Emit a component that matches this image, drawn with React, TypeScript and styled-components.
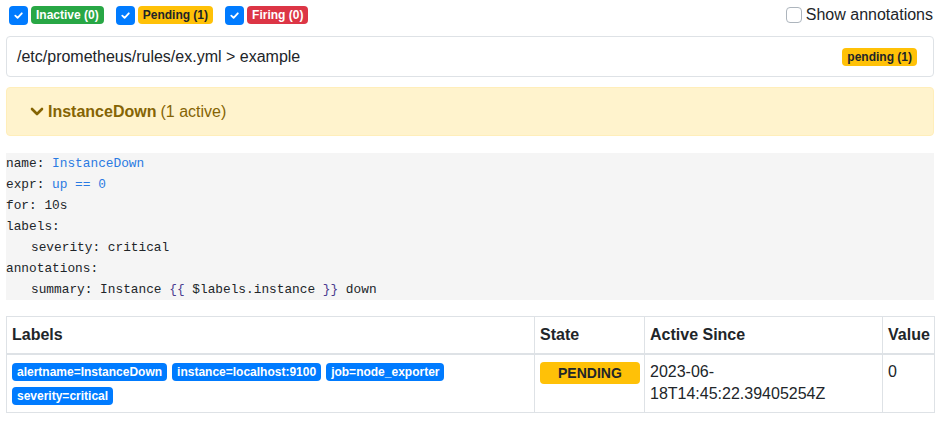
import React from "react";
import styled, { createGlobalStyle } from "styled-components";

const Global = createGlobalStyle`
  html, body { margin: 0; padding: 0; background: #fff; }
  body {
    font-family: "Segoe UI", "Liberation Sans", Arial, sans-serif;
    font-size: 16px;
    color: #212529;
    line-height: 1.5;
  }
`;

const Page = styled.div`
  padding: 5px 7px 0 6px;
`;

const FilterBar = styled.div`
  display: flex;
  align-items: center;
  height: 20px;
  margin-left: 3px;
`;

const FilterItem = styled.label`
  display: flex;
  align-items: center;
  gap: 3px;
  margin-right: 12px;
`;

const CheckBox = styled.span<{ $checked?: boolean }>`
  display: inline-flex;
  align-items: center;
  justify-content: center;
  width: ${(p) => (p.$checked ? "19px" : "16px")};
  height: ${(p) => (p.$checked ? "19px" : "16px")};
  box-sizing: border-box;
  border-radius: 4px;
  background: ${(p) => (p.$checked ? "#007bff" : "#fff")};
  border: ${(p) => (p.$checked ? "none" : "1px solid #adb5bd")};
`;

const Badge = styled.span<{ $bg: string; $fg: string }>`
  display: inline-block;
  background: ${(p) => p.$bg};
  color: ${(p) => p.$fg};
  font-weight: 700;
  font-size: 12px;
  line-height: 12px;
  padding: 3px 5px;
  border-radius: 4px;
  white-space: nowrap;
`;

const Spacer = styled.div`
  flex: 1;
`;

const AnnotToggle = styled.label`
  display: flex;
  align-items: center;
  gap: 4px;
  font-size: 16px;
  margin-right: 1px;
`;

const GroupCard = styled.div`
  margin-top: 11px;
  height: 41px;
  box-sizing: border-box;
  border: 1px solid #dee2e6;
  border-radius: 4px;
  display: flex;
  align-items: center;
  justify-content: space-between;
  padding: 0 16px 0 10px;
`;

const AlertHeader = styled.div`
  margin-top: 10px;
  height: 49px;
  box-sizing: border-box;
  background: #fff3cd;
  border: 1px solid #ffeeba;
  border-radius: 4px;
  color: #856404;
  display: flex;
  align-items: center;
  padding-left: 23px;
  gap: 4px;
`;

const RuleName = styled.strong`
  font-weight: 700;
`;

const CodeBlock = styled.pre`
  margin: 17px 0 0;
  background: #f5f5f5;
  font-family: "Liberation Mono", "DejaVu Sans Mono", monospace;
  font-size: 12.8px;
  line-height: 21px;
  color: #212529;
  padding: 0;
`;

const CodeLine = styled.div<{ $indent?: boolean }>`
  padding-left: ${(p) => (p.$indent ? "25px" : "0")};
`;

const Val = styled.span`
  color: #2a7ae2;
`;

const Brace = styled.span`
  color: #4b3b8f;
`;

const Table = styled.table`
  margin-top: 16px;
  width: 100%;
  border-collapse: collapse;
  table-layout: fixed;
`;

const Col = styled.col<{ $w: number }>`
  width: ${(p) => p.$w}px;
`;

const Th = styled.th`
  text-align: left;
  font-weight: 700;
  border: 1px solid #dee2e6;
  border-bottom: 2px solid #dee2e6;
  padding: 6px 5px 5px 5px;
  height: 37px;
  box-sizing: border-box;
  vertical-align: middle;
`;

const Td = styled.td`
  border: 1px solid #dee2e6;
  padding: 6px 5px 7px;
  vertical-align: top;
  line-height: 22px;
`;

const LabelsWrap = styled.div`
  display: flex;
  flex-wrap: wrap;
  gap: 6px 5px;
  padding-top: 2px;
`;

const StateBadge = styled.span`
  display: inline-block;
  background: #ffc107;
  color: #212529;
  font-weight: 700;
  font-size: 14px;
  line-height: 16px;
  padding: 3px 18px;
  border-radius: 4px;
  margin-top: 1px;
`;

const Check = () => (
  <svg width="11" height="11" viewBox="0 0 12 12">
    <path d="M2.5 6.2 L5 8.6 L9.6 3.6" stroke="#fff" strokeWidth="2" fill="none" strokeLinecap="round" strokeLinejoin="round" />
  </svg>
);

const Chevron = () => (
  <svg width="14" height="10" viewBox="0 0 14 10">
    <path d="M2 2 L7 7 L12 2" stroke="#856404" strokeWidth="2.6" fill="none" strokeLinecap="round" strokeLinejoin="round" />
  </svg>
);

export default function App() {
  return (
    <Page>
      <Global />
      <FilterBar>
        <FilterItem>
          <CheckBox $checked><Check /></CheckBox>
          <Badge $bg="#28a745" $fg="#fff">Inactive (0)</Badge>
        </FilterItem>
        <FilterItem>
          <CheckBox $checked><Check /></CheckBox>
          <Badge $bg="#ffc107" $fg="#212529">Pending (1)</Badge>
        </FilterItem>
        <FilterItem>
          <CheckBox $checked><Check /></CheckBox>
          <Badge $bg="#dc3545" $fg="#fff">Firing (0)</Badge>
        </FilterItem>
        <Spacer />
        <AnnotToggle>
          <CheckBox />
          Show annotations
        </AnnotToggle>
      </FilterBar>
      <GroupCard>
        <span>/etc/prometheus/rules/ex.yml &gt; example</span>
        <Badge $bg="#ffc107" $fg="#212529">pending (1)</Badge>
      </GroupCard>
      <AlertHeader>
        <Chevron />
        <RuleName>InstanceDown</RuleName>
        <span>(1 active)</span>
      </AlertHeader>
      <CodeBlock>
        <CodeLine>name: <Val>InstanceDown</Val></CodeLine>
        <CodeLine>expr: <Val>up == 0</Val></CodeLine>
        <CodeLine>for: 10s</CodeLine>
        <CodeLine>labels:</CodeLine>
        <CodeLine $indent>severity: critical</CodeLine>
        <CodeLine>annotations:</CodeLine>
        <CodeLine $indent>summary: Instance <Brace>{"{{"}</Brace> $labels.instance <Brace>{"}}"}</Brace> down</CodeLine>
      </CodeBlock>
      <Table>
        <colgroup>
          <Col $w={528} />
          <Col $w={110} />
          <Col $w={238} />
          <Col $w={52} />
        </colgroup>
        <thead>
          <tr>
            <Th>Labels</Th>
            <Th>State</Th>
            <Th>Active Since</Th>
            <Th>Value</Th>
          </tr>
        </thead>
        <tbody>
          <tr>
            <Td>
              <LabelsWrap>
                <Badge $bg="#007bff" $fg="#fff">alertname=InstanceDown</Badge>
                <Badge $bg="#007bff" $fg="#fff">instance=localhost:9100</Badge>
                <Badge $bg="#007bff" $fg="#fff">job=node_exporter</Badge>
                <Badge $bg="#007bff" $fg="#fff">severity=critical</Badge>
              </LabelsWrap>
            </Td>
            <Td>
              <StateBadge>PENDING</StateBadge>
            </Td>
            <Td>2023-06-18T14:45:22.39405254Z</Td>
            <Td>0</Td>
          </tr>
        </tbody>
      </Table>
    </Page>
  );
}
